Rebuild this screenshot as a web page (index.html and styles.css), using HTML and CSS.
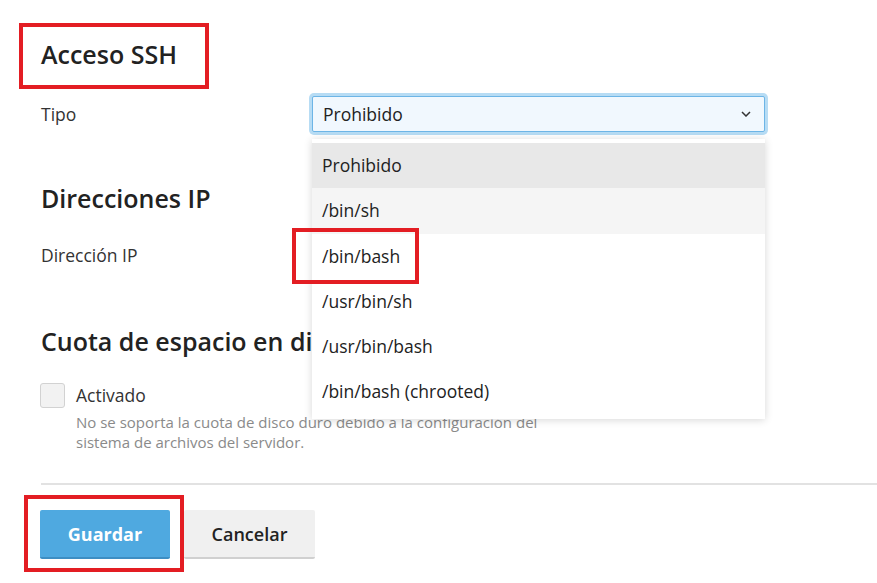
FILE: index.html
```html
<!DOCTYPE html>
<html lang="es">
<head>
  <meta charset="UTF-8" />
  <meta name="viewport" content="width=device-width, initial-scale=1.0"/>
  <title>Acceso SSH</title>
  <link rel="stylesheet" href="styles.css">
</head>
<body>
  <div class="page">
    <!-- ACCESO SSH -->
    <div class="mark heading-mark">
      <h2 class="section-title">Acceso SSH</h2>
    </div>
    <div class="form-row row-tipo">
      <label class="form-label">Tipo</label>
      <div class="select-wrap">
        <div class="select-box">
          <span>Prohibido</span>
          <svg class="chevron" width="10" height="6" viewBox="0 0 10 6"><polyline points="1,1 5,5 9,1" fill="none" stroke="#333" stroke-width="1.5"/></svg>
        </div>
        <ul class="dropdown">
          <li class="option selected">Prohibido</li>
          <li class="option hover">/bin/sh</li>
          <li class="option">/bin/bash<span class="option-mark"></span></li>
          <li class="option">/usr/bin/sh</li>
          <li class="option">/usr/bin/bash</li>
          <li class="option">/bin/bash (chrooted)</li>
        </ul>
      </div>
    </div>

    <!-- DIRECCIONES IP -->
    <h2 class="section-title title-ip">Direcciones IP</h2>
    <div class="form-row row-ip">
      <label class="form-label">Dirección IP</label>
    </div>

    <!-- CUOTA -->
    <h2 class="section-title title-quota">Cuota de espacio en disco</h2>
    <div class="check-row">
      <span class="checkbox"></span>
      <span class="check-label">Activado</span>
    </div>
    <p class="help-text">No se soporta la cuota de disco duro debido a la configuración del sistema de archivos del servidor.</p>

    <hr class="divider">

    <div class="buttons-row">
      <div class="mark button-mark">
        <button class="btn btn-primary">Guardar</button>
      </div>
      <button class="btn btn-default">Cancelar</button>
    </div>
  </div>
</body>
</html>
```

FILE: styles.css
```css
body {
  margin: 0;
  font-family: 'Open Sans', 'Noto Sans', sans-serif;
  color: #222;
  background-color: #fff;
}

.page {
  padding: 23px 0 0 41px;
}

.mark {
  border: 4px solid #e31d23;
  box-sizing: border-box;
}

.heading-mark {
  display: inline-block;
  margin-left: -22px;
  padding: 11px 28px 15px 18px;
}

.section-title {
  margin: 0;
  font-size: 25px;
  font-weight: 600;
  line-height: 32px;
}

.form-row {
  display: grid;
  grid-template-columns: 271px 453px;
  align-items: center;
}

.row-tipo {
  margin-top: 7px;
}

.form-label {
  font-size: 17.5px;
  line-height: 25px;
  color: #333;
}

.select-wrap {
  position: relative;
  z-index: 2;
}

.select-box {
  height: 36px;
  box-sizing: border-box;
  border: 1px solid #6db5e6;
  border-radius: 2px;
  background-color: #f1f8fe;
  box-shadow: 0 0 0 3px #b7dcf4;
  display: flex;
  align-items: center;
  justify-content: space-between;
  padding: 0 13px 0 10px;
  font-size: 17.5px;
  color: #222;
}

.dropdown {
  position: absolute;
  top: 43px;
  left: 0;
  right: 0;
  margin: 0;
  padding: 4px 0;
  list-style: none;
  background-color: #fff;
  box-shadow: 0 1px 8px rgba(0, 0, 0, 0.16);
}

.option {
  position: relative;
  padding: 10px 10px;
  font-size: 17.5px;
  line-height: 25.3px;
  color: #222;
}

.option.selected { background-color: #e8e8e8; }
.option.hover { background-color: #f5f5f5; }

.option-mark {
  position: absolute;
  left: -20px;
  top: -6px;
  width: 127px;
  height: 56px;
  border: 4px solid #e31d23;
  box-sizing: border-box;
}

.title-ip {
  margin-top: 50px;
}

.row-ip {
  margin-top: 29px;
}

.title-quota {
  margin-top: 57px;
  position: relative;
  z-index: 1;
}

.check-row {
  display: flex;
  align-items: center;
  margin-top: 26px;
  margin-left: -1px;
}

.checkbox {
  width: 25px;
  height: 25px;
  box-sizing: border-box;
  border: 1px solid #d2d2d2;
  border-radius: 3px;
  background-color: #f2f2f2;
}

.check-label {
  margin-left: 11px;
  font-size: 17.5px;
  line-height: 25px;
  color: #333;
}

.help-text {
  margin: 4px 0 0 35px;
  width: 480px;
  font-size: 15px;
  line-height: 20px;
  color: #8a8a8a;
}

.divider {
  margin: 31px 0 0 0;
  border: none;
  border-top: 2px solid #e2e2e2;
}

.buttons-row {
  display: flex;
  align-items: flex-start;
  margin-top: 10px;
}

.button-mark {
  margin-left: -17px;
  padding: 11px 10px 9px 12px;
}

.btn {
  width: 130px;
  height: 49px;
  border: none;
  border-radius: 2px;
  font-family: 'Open Sans', 'Noto Sans', sans-serif;
  font-size: 18px;
  font-weight: 700;
  cursor: pointer;
}

.btn-primary {
  background-color: #4fa9e0;
  color: #fff;
  border-bottom: 2px solid #3d8ec3;
}

.btn-default {
  margin-top: 15px;
  width: 131px;
  background-color: #f0f0f0;
  color: #222;
  font-weight: 600;
  border-bottom: 2px solid #d0d0d0;
}
```
